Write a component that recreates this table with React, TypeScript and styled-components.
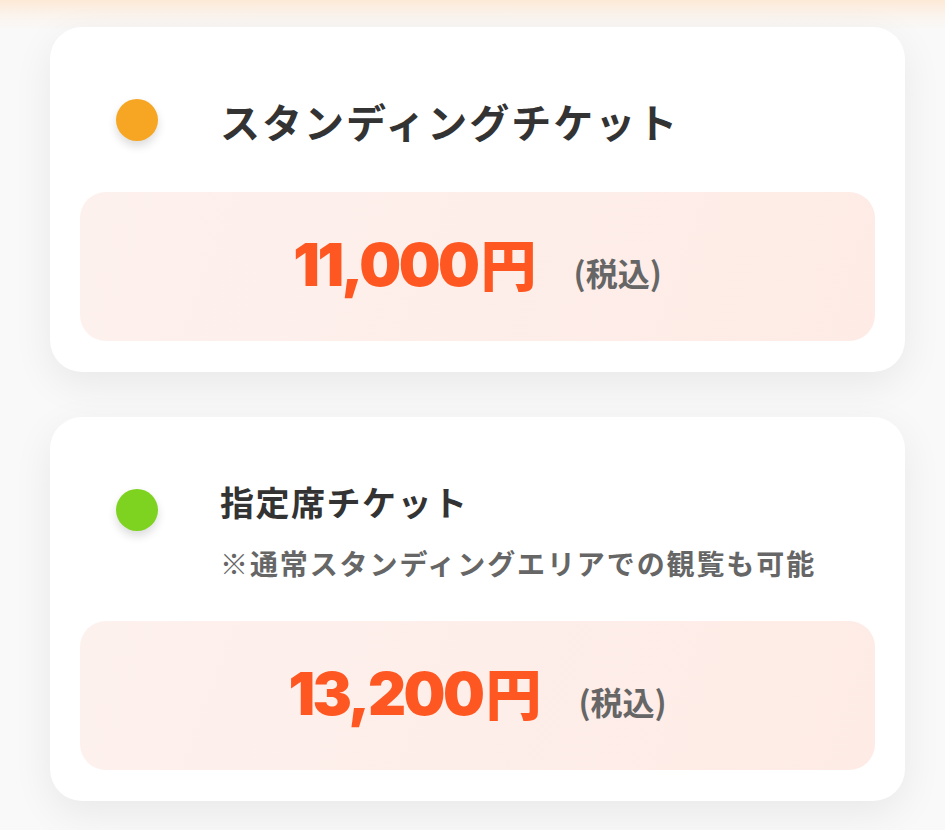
import React from "react";
import styled, { createGlobalStyle } from "styled-components";

type Ticket = {
  color: string;
  title: string;
  titleSize: "large" | "small";
  note?: string;
  price: string;
};

const TICKETS: Ticket[] = [
  {
    color: "#f6a623",
    title: "スタンディングチケット",
    titleSize: "large",
    price: "11,000",
  },
  {
    color: "#7ed321",
    title: "指定席チケット",
    titleSize: "small",
    note: "※通常スタンディングエリアでの観覧も可能",
    price: "13,200",
  },
];

const GlobalStyle = createGlobalStyle`
  html, body {
    margin: 0;
    padding: 0;
  }

  body {
    background: #f9f9f9;
    font-family: "Noto Sans CJK JP", "Noto Sans", sans-serif;
  }
`;

const Page = styled.div`
  min-height: 830px;
  box-sizing: border-box;
  padding: 27px 40px 30px 50px;
  display: flex;
  flex-direction: column;
  gap: 45px;
  background: linear-gradient(
    to bottom,
    #fde9d6 0px,
    #fbf3ec 14px,
    #f9f9f9 30px,
    #f9f9f9 100%
  );
`;

const Card = styled.section`
  width: 855px;
  box-sizing: border-box;
  padding: 30px 30px 31px;
  background: #ffffff;
  border-radius: 32px;
  box-shadow: 0 12px 40px rgba(0, 0, 0, 0.07);
`;

const Header = styled.div`
  display: flex;
  align-items: flex-start;
  padding: 36px 0 0 36px;
  gap: 62px;
`;

const Dot = styled.span<{ $color: string }>`
  flex: none;
  width: 42px;
  height: 42px;
  margin-top: 6px;
  border-radius: 50%;
  background: ${(p) => p.$color};
  box-shadow: 0 5px 10px rgba(0, 0, 0, 0.14);
`;

const TitleBlock = styled.div`
  display: flex;
  flex-direction: column;
`;

const Title = styled.h2<{ $size: "large" | "small" }>`
  margin: 0;
  color: #333333;
  font-weight: 700;
  font-size: ${(p) => (p.$size === "large" ? "40px" : "34px")};
  line-height: ${(p) => (p.$size === "large" ? "56px" : "38px")};
  letter-spacing: ${(p) => (p.$size === "large" ? "2px" : "1.5px")};
`;

const Note = styled.p`
  margin: 22px 0 0;
  color: #666666;
  font-weight: 700;
  font-size: 28px;
  line-height: 40px;
  letter-spacing: 1.9px;
`;

const PriceBox = styled.div<{ $gap: number }>`
  margin-top: ${(p) => p.$gap}px;
  height: 149px;
  border-radius: 26px;
  background: linear-gradient(110deg, #fdf1ee 0%, #feebe5 100%);
  display: flex;
  align-items: center;
  justify-content: center;
`;

const PriceLine = styled.div`
  display: flex;
  align-items: baseline;
  gap: 37px;
  margin-top: -6px;
  line-height: 1;
`;

const Amount = styled.span`
  color: #ff5722;
  font-family: Inter, "Noto Sans CJK JP", sans-serif;
  font-weight: 900;
  font-size: 59px;
  letter-spacing: -2.5px;
`;

const Yen = styled.span`
  margin-left: 3px;
  font-family: "Noto Sans CJK JP", sans-serif;
  font-weight: 900;
  font-size: 56px;
  letter-spacing: 0;
`;

const Tax = styled.span`
  color: #666666;
  font-weight: 700;
  font-size: 32px;
`;

function TicketCard({ ticket }: { ticket: Ticket }) {
  return (
    <Card>
      <Header>
        <Dot $color={ticket.color} />
        <TitleBlock>
          <Title $size={ticket.titleSize}>{ticket.title}</Title>
          {ticket.note && <Note>{ticket.note}</Note>}
        </TitleBlock>
      </Header>
      <PriceBox $gap={ticket.note ? 38 : 43}>
        <PriceLine>
          <Amount>
            {ticket.price}
            <Yen>円</Yen>
          </Amount>
          <Tax>(税込)</Tax>
        </PriceLine>
      </PriceBox>
    </Card>
  );
}

export default function App() {
  return (
    <>
      <GlobalStyle />
      <Page>
        {TICKETS.map((ticket) => (
          <TicketCard key={ticket.title} ticket={ticket} />
        ))}
      </Page>
    </>
  );
}
